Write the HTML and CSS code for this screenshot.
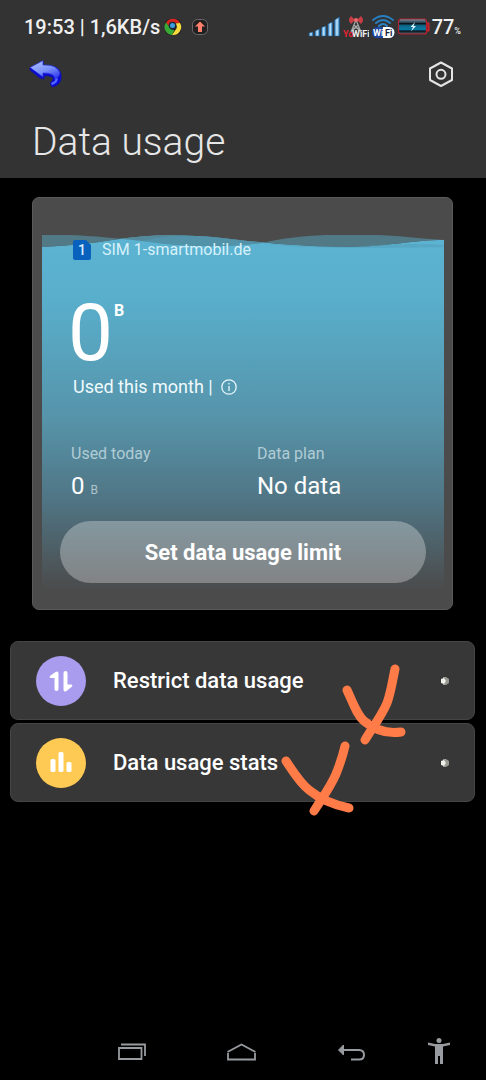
FILE: index.html
```html
<!DOCTYPE html>
<html lang="en">
<head>
<meta charset="utf-8">
<meta name="viewport" content="width=device-width, initial-scale=1">
<title>Data usage</title>
<link rel="stylesheet" href="styles.css">
</head>
<body>
<header class="header">
  <div class="status">
    <span class="clock">19:53 | 1,6KB/s</span>
    <svg class="browser-icon" width="18" height="18" viewBox="0 0 18 18" aria-hidden="true">
      <rect x="1" y="1" width="16" height="16" rx="5" fill="#2a2020"/>
      <path d="M2 5A8 8 0 0 1 16 5L9 5.500Q6 5.500 5.500 9Z" fill="#d8281e"/>
      <path d="M2 4.500A8 8 0 0 0 8 17L10.500 12Q6.500 12.500 5.500 9Z" fill="#35aa35"/>
      <path d="M16 5A8 8 0 0 1 8 17L12.500 10.500Q13.500 7 11 5.500Z" fill="#f7dc3c"/>
      <circle cx="8.500" cy="7.500" r="3.800" fill="#17283c"/>
      <circle cx="8.500" cy="7.500" r="2.500" fill="#3e9ee0"/>
    </svg>
    <svg class="upload-icon" width="18" height="18" viewBox="0 0 18 18" aria-hidden="true">
      <rect x="1.500" y="1.500" width="15" height="15" rx="5" fill="#211f20" stroke="#69696c"/>
      <path d="M9 3.500L14 8.500H11V14H7V8.500H4Z" fill="#ff806a"/>
    </svg>
    <div class="indicators">
      <svg width="33" height="22" viewBox="0 0 33 22" aria-hidden="true">
        <defs><linearGradient id="bar" x2="1"><stop stop-color="#2b75b9"/><stop offset=".5" stop-color="#c9edff"/><stop offset="1" stop-color="#176bb7"/></linearGradient></defs>
        <g stroke="#1e6299" stroke-width=".5">
          <path d="M1 17L5 16V20H1Z" fill="url(#bar)"/><path d="M7 15L11.500 13V20H7Z" fill="url(#bar)"/><path d="M13.500 11.500L18 10V20H13.500Z" fill="url(#bar)"/><path d="M20 8L24.500 6V20H20Z" fill="url(#bar)"/><path d="M26.500 4L31.500 1V20H26.500Z" fill="url(#bar)"/>
        </g>
      </svg>
      <svg width="26" height="24" viewBox="0 0 26 24" aria-hidden="true">
        <path d="M13 5L8 17M13 5L18 17M10 13H16M11 10L17 16M15 10L9 16" fill="none" stroke="#aaa" stroke-width="1.200"/>
        <path d="M12 5L8 1Q4 5 8 9ZM14 5L18 1Q22 5 18 9Z" fill="#c93d45"/>
        <circle cx="13" cy="5" r="2" fill="#ec6970"/>
        <text x="0" y="22" class="mini" fill="#e52431">Yo</text><text x="9" y="22" class="mini" fill="#eee">WiFi</text>
      </svg>
      <svg width="24" height="26" viewBox="0 0 24 26" aria-hidden="true">
        <g fill="none" stroke="#287fc2" stroke-width="2" stroke-linecap="round"><path d="M2 6Q12 -2 22 6M5 9Q12 3 19 9M8 12Q12 8 16 12"/></g>
        <rect x="1" y="13" width="22" height="11" rx="5" fill="#1d489d"/>
        <path d="M12 13H18A5 5 0 0 1 18 24H12Z" fill="#fff"/>
        <text x="2" y="22" class="mini" fill="#fff">Wi</text><text x="14" y="22" class="mini" fill="#19233e">Fi</text>
      </svg>
      <svg width="33" height="20" viewBox="0 0 33 20" aria-hidden="true">
        <defs><linearGradient id="cell" x2="0" y2="1"><stop stop-color="#26313b"/><stop offset=".2" stop-color="#416174"/><stop offset=".3" stop-color="#08131c"/><stop offset=".45" stop-color="#12688a"/><stop offset=".7" stop-color="#0879a1"/><stop offset=".8" stop-color="#07131b"/><stop offset="1" stop-color="#4c6470"/></linearGradient></defs>
        <rect x="1.500" y="2" width="28" height="15" rx="2" fill="url(#cell)" stroke="#b91f2b" stroke-width="1.200"/>
        <path d="M30 6H32V14H30" fill="#a71c27" stroke="#d52835"/><path d="M3 3H28" stroke="#979ca2"/>
        <path d="M18 5L13.500 10H16L14 14.500L19 9H16.500Z" fill="#d9f6ff"/>
      </svg>
      <span class="battery">77<small>%</small></span>
    </div>
  </div>
  <div class="toolbar">
    <button class="icon-button" aria-label="Back">
      <svg width="34" height="30" viewBox="0 0 34 30">
        <defs><linearGradient id="arrow" x2=".7" y2="1"><stop stop-color="#b4c7ff"/><stop offset=".6" stop-color="#7a91fa"/><stop offset="1" stop-color="#3a42ee"/></linearGradient></defs>
        <path d="M1 9L14 2V7Q30 5 32 15V20Q31 26 23 28L21 24Q26 21 23 18Q20 16 15 17V20L11 19L1 11Z" fill="#0909d8" stroke="#1414a0"/>
        <path d="M1 8.500L14 1.500V6Q28 5 31 14Q30 19 26 20Q26 14 14 14V18Z" fill="url(#arrow)" stroke="#2430d0" stroke-width=".7"/>
        <path d="M22.500 25Q28 23 27.500 19.500" fill="none" stroke="#5268ff" stroke-width="2.500"/>
      </svg>
    </button>
    <button class="icon-button" aria-label="Settings">
      <svg width="28" height="28" viewBox="0 0 28 28" fill="none" stroke="#e4e4e4" stroke-width="2" stroke-linejoin="round"><path d="M14 2.500L25 8.500V20L14 26L3 20V8.500Z"/><circle cx="14" cy="14.300" r="4.500"/></svg>
    </button>
  </div>
  <h1 class="title">Data usage</h1>
</header>
<main class="main">
  <section class="card">
    <div class="water">
      <svg class="waves" viewBox="0 0 402 14" preserveAspectRatio="none" aria-hidden="true">
        <path d="M0 12Q42 10 70 5C105 -1 140 -1 180 3C230 9 270 12 310 12C350 11 370 5 402 5V14H0Z" fill="#5bb2d1"/>
        <path d="M0 0C40 -1 70 3 100 6C140 12 185 13 220 8C260 -2 320 -2 365 2Q385 4 402 5C370 5 350 11 310 12C270 12 230 9 180 3C140 -1 105 -1 70 5Q42 10 0 12Z" fill="#528190" opacity=".85"/>
        <path d="M100 6C140 12 185 13 220 8Q198 6 180 3C150 -1 120 1 100 6ZM220 8C250 14 340 13 402 12V10Q360 7 310 12Q260 12 220 8Z" fill="#529db8" opacity=".5"/>
      </svg>
    </div>
    <div class="card-content">
      <div class="sim">
        <svg width="18" height="20" viewBox="0 0 18 20" aria-hidden="true"><path d="M2 0H13L18 5V18Q18 20 16 20H2Q0 20 0 18V2Q0 0 2 0Z" fill="#0862bd"/><text x="9" y="15" text-anchor="middle" class="sim-number">1</text></svg>
        <span>SIM 1-smartmobil.de</span>
      </div>
      <div class="total">0<sup>B</sup></div>
      <div class="month"><span>Used this month |</span>
        <svg width="16" height="16" viewBox="0 0 16 16" fill="none" stroke="#e8f8fc" stroke-width="1.300" role="img" aria-label="Information"><circle cx="8" cy="8" r="7.200"/><path d="M8 7V12M8 4V5.500"/></svg>
      </div>
      <dl class="stats">
        <div><dt>Used today</dt><dd>0 <small>B</small></dd></div>
        <div><dt>Data plan</dt><dd>No data</dd></div>
      </dl>
      <button class="limit">Set data usage limit</button>
    </div>
  </section>
  <nav class="options" aria-label="Data options">
    <a class="option" href="#restrict">
      <svg width="50" height="50" viewBox="0 0 50 50" aria-hidden="true"><circle cx="25" cy="25" r="25" fill="#a99bed"/><path d="M14.500 19.500L19.500 16Q22.500 14.500 22.500 17.500V33A2 2 0 0 1 18.500 33V22H15Q12.500 21.500 14.500 19.500ZM27.500 17A2 2 0 0 1 31.500 17V28.500H35Q37.500 29 35.500 31L30.500 35Q27.500 36.500 27.500 33.500Z" fill="#fff"/></svg>
      <span>Restrict data usage</span>
      <svg class="more" width="8" height="10" viewBox="0 0 8 10" aria-hidden="true"><path d="M2 1H5L8 3V7L5 9H2Z" fill="#989a92"/><path d="M0 3L3 2L5 5L3 8L0 7Z" fill="#f0f0eb"/></svg>
    </a>
    <a class="option" href="#stats">
      <svg width="50" height="50" viewBox="0 0 50 50" aria-hidden="true"><circle cx="25" cy="25" r="25" fill="#ffca54"/><g fill="#fff"><rect x="14.500" y="21" width="5" height="13" rx="1.500"/><rect x="22.500" y="14" width="5" height="20" rx="1.500"/><rect x="30.500" y="24" width="5" height="10" rx="1.500"/></g></svg>
      <span>Data usage stats</span>
      <svg class="more" width="8" height="10" viewBox="0 0 8 10" aria-hidden="true"><path d="M2 1H5L8 3V7L5 9H2Z" fill="#989a92"/><path d="M0 3L3 2L5 5L3 8L0 7Z" fill="#f0f0eb"/></svg>
    </a>
    <svg class="marks" width="130" height="154" viewBox="0 0 130 154" aria-hidden="true">
      <path d="M67 29C73 42 77 54 84 60C96 70 108 73 121 71M115 8C112 22 111 31 107 42C102 54 93 66 85 79M6 100C14 112 20 122 29 129C40 138 54 144 69 147M65 85C63 94 60 103 56 113C50 127 42 137 34 150"/>
    </svg>
  </nav>
</main>
<nav class="system" aria-label="System">
  <div class="system-main">
    <button class="icon-button" aria-label="Recent apps"><svg width="28" height="28" viewBox="0 0 28 28" fill="none" stroke="#989b9f" stroke-width="1.800"><path d="M1 11H23.500V22H1ZM3 7.500H27V19"/></svg></button>
    <button class="icon-button" aria-label="Home"><svg width="32" height="28" viewBox="0 0 32 28" fill="none" stroke="#989b9f" stroke-width="1.800"><path d="M1.500 15L15.500 7.500L29.500 15M2 16V22.500H29V16"/></svg></button>
    <button class="icon-button" aria-label="Back"><svg width="28" height="28" viewBox="0 0 28 28" fill="none" stroke="#989b9f" stroke-width="2"><path d="M3 13H21Q26 13 26 18Q26 22.500 21 22.500H13"/><path d="M5.500 8L0.500 13L5.500 18V13Z" fill="#989b9f" stroke-width="1"/></svg></button>
  </div>
  <button class="icon-button" aria-label="Accessibility"><svg width="24" height="28" viewBox="0 0 24 28" fill="#989b9f"><circle cx="12" cy="3.500" r="2.500"/><path d="M1 5.500L8 7H16L23 5.500V8L16 9.500V27H13V19H11V27H8V9.500L1 8Z"/></svg></button>
</nav>
</body>
</html>
```

FILE: styles.css
```css
* { box-sizing: border-box; }
body {
  margin: 0;
  min-height: 100vh;
  display: flex;
  flex-direction: column;
  background: #000;
  color: #fff;
  font-family: Roboto, sans-serif;
}
svg { display: block; flex: none; }
button { border: 0; padding: 0; background: none; color: inherit; font: inherit; cursor: pointer; }
.header { background: #333; padding-bottom: 12px; }
.status { display: flex; align-items: center; height: 54px; padding: 0 25px 0 24px; }
.clock { font-size: 20px; font-weight: 500; line-height: 24px; white-space: nowrap; color: #f0f0f0; }
.browser-icon { margin-left: 4px; }
.upload-icon { margin-left: 9px; }
.indicators { display: flex; align-items: center; gap: 2px; margin-left: auto; }
.battery { display: flex; align-items: baseline; font-size: 20px; font-weight: 500; line-height: 24px; color: #f0f0f0; }
.battery small { font-size: 9px; line-height: 12px; }
.mini { font: bold 9px Roboto, sans-serif; }
.toolbar { display: flex; align-items: center; justify-content: space-between; height: 40px; padding: 0 31px 0 29px; }
.title { margin: 24px 32px 0; font-size: 39px; font-weight: 300; line-height: 48px; color: #e6e6e6; }
.main { flex: 1; padding: 19px 10px 24px; }
.card {
  position: relative;
  margin: 0 23px 0 22px;
  padding: 42px 26px 26px 27px;
  border: 1px solid #5a5a5a;
  border-radius: 7px;
  background: #4b4b4b;
}
.water {
  position: absolute;
  inset: 37px 8px 8px 9px;
  background: linear-gradient(transparent 13px, #5bb2d1 13px, #59aecb 18%, #5694aa 50%, #507483 73%, #4b4b4b 97%);
}
.waves { width: 100%; height: 14px; }
.card-content { position: relative; }
.sim { display: flex; align-items: center; gap: 11px; padding-left: 13px; font-size: 16px; line-height: 20px; color: #d7f1fa; }
.sim-number { font: 500 14px Roboto, sans-serif; fill: #d9ecff; }
.total { display: flex; align-items: flex-start; padding-left: 8px; margin-top: 25px; font-size: 80px; line-height: 96px; }
.total sup { font-size: 16px; font-weight: 700; line-height: 20px; margin: 16px 0 0 1px; }
.month { display: flex; align-items: center; gap: 8px; padding-left: 13px; font-size: 18px; line-height: 20px; margin-top: -4px; color: #f0fafd; }
.stats { display: grid; grid-template-columns: 186px 1fr; margin: 47px 0 0; padding-left: 11px; }
.stats dt { font-size: 16px; line-height: 20px; color: #b0ccd5; }
.stats dd { margin: 7px 0 0; font-size: 24px; line-height: 30px; }
.stats small { font-size: 12px; color: #afc3ca; }
.limit {
  display: block;
  width: 100%;
  height: 62px;
  margin-top: 16px;
  border-radius: 31px;
  background: rgba(255, 255, 255, .3);
  font-size: 22px;
  font-weight: 700;
}
.options { position: relative; display: flex; flex-direction: column; gap: 3px; margin: 31px 1px 0 0; }
.option {
  display: flex;
  align-items: center;
  gap: 27px;
  height: 79px;
  padding: 0 25px;
  border: 1px solid #454545;
  border-radius: 8px;
  background: #373737;
  color: #fff;
  font-size: 22px;
  font-weight: 500;
  text-decoration: none;
}
.more { margin-left: auto; }
.marks {
  position: absolute;
  top: 20px;
  right: 65px;
  overflow: visible;
  fill: none;
  stroke: #ff7b47;
  stroke-width: 9;
  stroke-linecap: round;
  stroke-linejoin: round;
  pointer-events: none;
}
.system { display: flex; align-items: center; justify-content: space-between; height: 58px; padding: 0 35px 0 118px; }
.system-main { display: flex; gap: 80px; }
```
